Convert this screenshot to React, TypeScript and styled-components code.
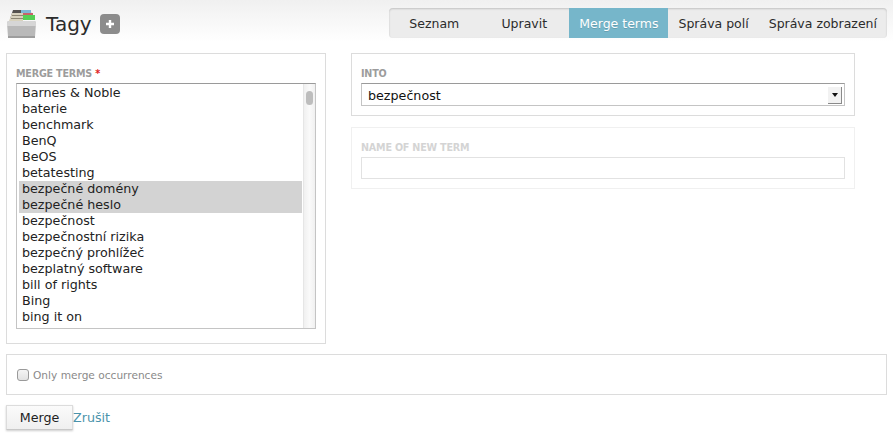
import React from 'react';
import styled, { createGlobalStyle } from 'styled-components';

const terms = [
  'Barnes & Noble',
  'baterie',
  'benchmark',
  'BenQ',
  'BeOS',
  'betatesting',
  'bezpečné domény',
  'bezpečné heslo',
  'bezpečnost',
  'bezpečnostní rizika',
  'bezpečný prohlížeč',
  'bezplatný software',
  'bill of rights',
  'Bing',
  'bing it on',
  'black friday',
];

const selectedTerms = ['bezpečné domény', 'bezpečné heslo'];

const tabs = ['Seznam', 'Upravit', 'Merge terms', 'Správa polí', 'Správa zobrazení'];

const GlobalStyle = createGlobalStyle`
  html, body {
    margin: 0;
    padding: 0;
    background: #fff;
  }
  body {
    width: 893px;
    height: 439px;
    overflow: hidden;
    font-family: "DejaVu Sans", "Liberation Sans", sans-serif;
    font-size: 12.7px;
    color: #222;
  }
`;

const Header = styled.div`
  display: flex;
  justify-content: space-between;
  align-items: flex-start;
  height: 53px;
  box-sizing: border-box;
  padding: 8px 6px 0 6px;
  background: linear-gradient(#f0f0f0 0, #fff 42px);
`;

const TitleRow = styled.div`
  display: flex;
  align-items: center;
  height: 32px;
`;

const Title = styled.h1`
  margin: 0 0 0 9px;
  font-size: 20px;
  font-weight: normal;
  color: #2b2b2b;
`;

const AddBadge = styled.span`
  display: flex;
  align-items: center;
  justify-content: center;
  width: 20px;
  height: 20px;
  margin-left: 8px;
  border-radius: 4px;
  background: #8c8c8c;
`;

const TabBar = styled.div`
  display: flex;
  height: 30px;
  border-radius: 4px;
  background: #ececec;
  box-shadow: inset 0 1px 2px rgba(0, 0, 0, 0.18);
  overflow: hidden;
`;

const Tab = styled.div<{ $active?: boolean; $wide?: boolean }>`
  display: flex;
  align-items: center;
  justify-content: center;
  min-width: ${(p) => (p.$wide ? 90 : 0)}px;
  padding: 0 10px;
  box-sizing: border-box;
  font-size: 12.5px;
  white-space: nowrap;
  color: ${(p) => (p.$active ? '#fff' : '#2b2b2b')};
  background: ${(p) => (p.$active ? '#76b6ca' : 'transparent')};
  text-shadow: ${(p) => (p.$active ? '0 1px 0 rgba(0,0,0,.15)' : 'none')};
`;

const Main = styled.div`
  padding: 0 6px;
`;

const Columns = styled.div`
  display: flex;
  align-items: flex-start;
  gap: 25px;
`;

const RightColumn = styled.div`
  display: flex;
  flex-direction: column;
  gap: 11px;
  width: 504px;
`;

const Panel = styled.div<{ $faded?: boolean }>`
  box-sizing: border-box;
  padding: 13px 9px 9px 9px;
  border: 1px solid ${(p) => (p.$faded ? '#f0f0f0' : '#dcdcdc')};
`;

const MergePanel = styled(Panel)`
  width: 320px;
  height: 291px;
`;

const Label = styled.label<{ $faded?: boolean }>`
  display: block;
  height: 16px;
  font-size: 9.6px;
  line-height: 14px;
  letter-spacing: -0.2px;
  font-weight: bold;
  color: ${(p) => (p.$faded ? '#d4d4d4' : '#9c9c9c')};
`;

const Required = styled.span`
  color: #e02020;
`;

const TermList = styled.div`
  display: flex;
  height: 246px;
  box-sizing: border-box;
  border: 1px solid #c4c4c4;
  border-top-color: #9a9a9a;
  overflow: hidden;
`;

const TermItems = styled.div`
  flex: 1;
  padding: 1px 0 0 2px;
  overflow: hidden;
`;

const Term = styled.div<{ $selected?: boolean }>`
  height: 16px;
  padding-left: 3px;
  font-size: 12.7px;
  line-height: 16px;
  white-space: nowrap;
  color: #222;
  background: ${(p) => (p.$selected ? '#d3d3d3' : 'transparent')};
`;

const ScrollTrack = styled.div`
  position: relative;
  width: 11px;
  margin-left: 1px;
  background: linear-gradient(90deg, #f0f0f0, #fafafa 50%, #f0f0f0);
  border-left: 1px solid #e6e6e6;
`;

const ScrollThumb = styled.div`
  position: absolute;
  top: 7px;
  left: 2px;
  width: 7px;
  height: 14px;
  border-radius: 4px;
  background: #bdbdbd;
`;

const SelectBox = styled.div`
  position: relative;
  display: flex;
  align-items: center;
  height: 23px;
  box-sizing: border-box;
  padding: 1px 0 0 6px;
  border: 1px solid #c4c4c4;
  border-top-color: #9a9a9a;
  font-size: 12.7px;
  color: #111;
`;

const SelectArrow = styled.span`
  position: absolute;
  top: 3px;
  right: 2px;
  display: flex;
  align-items: center;
  justify-content: center;
  width: 13px;
  height: 16px;
  background: #f2f2f2;
  border-right: 1px solid #8a8a8a;
  border-bottom: 1px solid #8a8a8a;
  &::after {
    content: '';
    border-left: 3px solid transparent;
    border-right: 3px solid transparent;
    border-top: 4px solid #111;
  }
`;

const TextBox = styled.div`
  height: 22px;
  box-sizing: border-box;
  border: 1px solid #e2e2e2;
`;

const OptionsPanel = styled(Panel)`
  display: flex;
  align-items: center;
  height: 41px;
  margin-top: 10px;
  padding: 0 10px;
`;

const CheckLabel = styled.label`
  display: flex;
  align-items: center;
  font-size: 10.6px;
  color: #8a8a8a;
`;

const Check = styled.span`
  width: 10px;
  height: 10px;
  margin-right: 4px;
  border: 1px solid #9a9a9a;
  border-radius: 3px;
  background: linear-gradient(#f4f4f4, #e2e2e2);
`;

const Actions = styled.div`
  display: flex;
  align-items: center;
  margin-top: 10px;
`;

const MergeButton = styled.button`
  width: 67px;
  height: 25px;
  padding: 0;
  border: 1px solid #dcdcdc;
  border-bottom-color: #c8c8c8;
  background: linear-gradient(#fbfbfb, #efefef);
  box-shadow: 0 1px 2px rgba(0, 0, 0, 0.2);
  font-family: inherit;
  font-size: 12.7px;
  color: #222;
`;

const CancelLink = styled.a`
  font-size: 12.7px;
  color: #4b93ab;
  text-decoration: none;
`;

const DrawerIcon = () => (
  <svg width="31" height="30" viewBox="0 0 31 30">
    <path d="M4 10 L7 1 H24 L28 10 Z" fill="#55524e" />
    <rect x="15" y="1" width="10" height="4" fill="#7fb6d6" />
    <rect x="17" y="4" width="10" height="4" fill="#c9616a" />
    <path d="M3 12 L6 4 H17 V15 H3 Z" fill="#d8d2bd" />
    <rect x="6" y="6" width="14" height="1" fill="#8d8774" />
    <rect x="5" y="9" width="16" height="1" fill="#8d8774" />
    <rect x="17" y="6" width="12" height="5" fill="#55cf55" />
    <path d="M1 14 Q1 12 3 12 H28 Q30 12 30 14 L29 28 Q29 29 28 29 H3 Q2 29 2 28 Z" fill="#b9b9b9" />
    <path d="M1 14 Q1 12 3 12 H28 Q30 12 30 14 L30 17 H1 Z" fill="#d6d6d6" />
    <rect x="2" y="27" width="27" height="2" fill="#9d9d9d" />
  </svg>
);

const PlusIcon = () => (
  <svg width="10" height="10" viewBox="0 0 10 10">
    <path d="M5 1 V9 M1 5 H9" stroke="#fff" strokeWidth="2.4" />
  </svg>
);

export default function App() {
  return (
    <>
      <GlobalStyle />
      <Header>
        <TitleRow>
          <DrawerIcon />
          <Title>Tagy</Title>
          <AddBadge>
            <PlusIcon />
          </AddBadge>
        </TitleRow>
        <TabBar>
          {tabs.map((tab, index) => (
            <Tab key={tab} $active={tab === 'Merge terms'} $wide={index < 2}>
              {tab}
            </Tab>
          ))}
        </TabBar>
      </Header>
      <Main>
        <Columns>
          <MergePanel>
            <Label>
              MERGE TERMS <Required>*</Required>
            </Label>
            <TermList>
              <TermItems>
                {terms.map((term) => (
                  <Term key={term} $selected={selectedTerms.includes(term)}>
                    {term}
                  </Term>
                ))}
              </TermItems>
              <ScrollTrack>
                <ScrollThumb />
              </ScrollTrack>
            </TermList>
          </MergePanel>
          <RightColumn>
            <Panel>
              <Label>INTO</Label>
              <SelectBox>
                bezpečnost
                <SelectArrow />
              </SelectBox>
            </Panel>
            <Panel $faded>
              <Label $faded>NAME OF NEW TERM</Label>
              <TextBox />
            </Panel>
          </RightColumn>
        </Columns>
        <OptionsPanel>
          <CheckLabel>
            <Check />
            Only merge occurrences
          </CheckLabel>
        </OptionsPanel>
        <Actions>
          <MergeButton>Merge</MergeButton>
          <CancelLink href="#">Zrušit</CancelLink>
        </Actions>
      </Main>
    </>
  );
}
